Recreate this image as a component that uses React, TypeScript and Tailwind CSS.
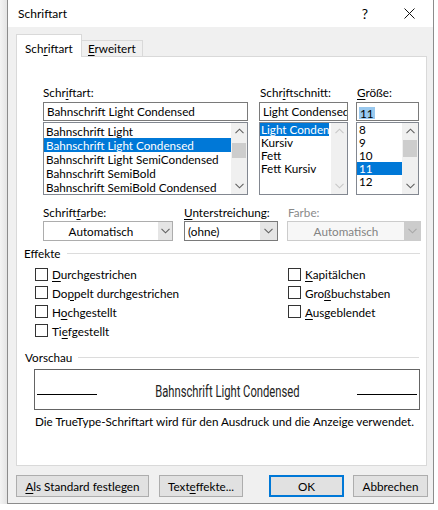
import React from "react";

const U = ({ c }: { c: string }) => (
  <span className="underline decoration-1 underline-offset-[2px]">{c}</span>
);

function Chev({ up, color = "#606060" }: { up?: boolean; color?: string }) {
  return (
    <svg width="9" height="6" viewBox="0 0 9 6">
      {up ? (
        <path d="M0.5 5.2 L4.5 1.2 L8.5 5.2" fill="none" stroke={color} strokeWidth="1.1" />
      ) : (
        <path d="M0.5 0.8 L4.5 4.8 L8.5 0.8" fill="none" stroke={color} strokeWidth="1.1" />
      )}
    </svg>
  );
}

function ScrollBar({ thumbTop, thumbH, disabled }: { thumbTop: number; thumbH: number; disabled?: boolean }) {
  const c = disabled ? "#c8c8c8" : "#606060";
  return (
    <div className="w-[16px] h-full bg-[#f0f0f0] flex flex-col">
      <div className="h-[16px] flex items-center justify-center">
        <Chev up color={c} />
      </div>
      <div className="flex-1">
        {!disabled && <div className="mx-[1px] bg-[#cdcdcd]" style={{ marginTop: thumbTop, height: thumbH }} />}
      </div>
      <div className="h-[16px] flex items-center justify-center">
        <Chev color={c} />
      </div>
    </div>
  );
}

function CheckRow({ h, label }: { h: string; label: React.ReactNode }) {
  return (
    <div className={`${h} flex items-center`}>
      <div className="w-[13px] h-[13px] border border-[#333333] bg-white" />
      <div className="ml-[4px]">{label}</div>
    </div>
  );
}

export default function App() {
  return (
    <div className="w-[438px] h-[510px] bg-white flex font-['Lato',sans-serif] text-[11.7px] leading-[16px] text-black overflow-hidden">
      <div className="w-[7px] h-[504px] bg-gradient-to-r from-[#f4f4f4] to-[#e4e4e4]" />
      <div className="w-[427px] h-[504px] flex flex-col border-x border-b border-[#8c8c8c] bg-[#f0f0f0]">
        {/* Title bar */}
        <div className="h-[27px] bg-white flex items-center">
          <div className="pl-[10px] text-[12px]">Schriftart</div>
          <div className="ml-auto w-[46px] text-center text-[14px]">?</div>
          <div className="w-[42px] flex justify-center">
            <svg width="11" height="11" viewBox="0 0 11 11">
              <path d="M0.5 0.5 L10.5 10.5 M10.5 0.5 L0.5 10.5" stroke="#111" strokeWidth="1" />
            </svg>
          </div>
          <div className="w-[3px]" />
        </div>

        {/* Body */}
        <div className="h-[476px] pl-[8px] pt-[7px] flex flex-col">
          {/* Tabs */}
          <div className="h-[22px] flex items-end">
            <div className="w-[66px] h-[23px] -mb-px relative z-10 bg-white border border-b-0 border-[#d9d9d9] pl-[8px] pt-[5px]">
              Sch<U c="r" />iftart
            </div>
            <div className="w-[61px] h-[16px] border border-l-0 border-b-0 border-[#d9d9d9] pl-[6px] leading-[15px]">
              <U c="E" />rweitert
            </div>
          </div>

          {/* Panel */}
          <div className="w-[411px] h-[410px] border border-[#d9d9d9] bg-white flex flex-col">
            {/* Font section */}
            <div className="pl-[26px] pt-[27px]">
              <div className="flex h-[16px]">
                <div className="w-[205px]">Schr<U c="i" />ftart:</div>
                <div className="ml-[11px] w-[89px] pl-[1px]">Schr<U c="i" />ftschnitt:</div>
                <div className="ml-[8px] w-[63px] pl-[1px]"><U c="G" />röße:</div>
              </div>
              <div className="flex mt-[2px] h-[19px]">
                <div className="w-[205px] border border-[#7a7a7a] pl-[3px] leading-[17px] overflow-hidden whitespace-nowrap">
                  Bahnschrift Light Condensed
                </div>
                <div className="ml-[11px] w-[89px] border border-[#7a7a7a] pl-[3px] leading-[17px] overflow-hidden whitespace-nowrap">
                  Light Condensed
                </div>
                <div className="ml-[8px] w-[63px] border border-[#7a7a7a] pl-[2px] pt-[2px]">
                  <span className="inline-block bg-[#99c9ef] px-[1px] leading-[12px] h-[12px]">11</span>
                </div>
              </div>
              <div className="flex mt-[1px] h-[73px]">
                {/* Font list */}
                <div className="w-[205px] border border-[#828790] flex">
                  <div className="flex-1 pt-[1px] overflow-hidden whitespace-nowrap">
                    <div className="h-[14px] leading-[14px] pl-[2px]">Bahnschrift Light</div>
                    <div className="h-[14px] leading-[14px] pl-[2px] bg-[#0078d7] text-white">Bahnschrift Light Condensed</div>
                    <div className="h-[14px] leading-[14px] pl-[2px]">Bahnschrift Light SemiCondensed</div>
                    <div className="h-[14px] leading-[14px] pl-[2px]">Bahnschrift SemiBold</div>
                    <div className="h-[14px] leading-[14px] pl-[2px]">Bahnschrift SemiBold Condensed</div>
                  </div>
                  <ScrollBar thumbTop={4} thumbH={15} />
                </div>
                {/* Style list */}
                <div className="ml-[11px] w-[89px] border border-[#828790] flex">
                  <div className="flex-1 overflow-hidden whitespace-nowrap">
                    <div className="w-[69px] h-[13px] leading-[13px] pl-[1px] bg-[#0078d7] text-white overflow-hidden">Light Condensed</div>
                    <div className="h-[13px] leading-[13px] pl-[1px]">Kursiv</div>
                    <div className="h-[13px] leading-[13px] pl-[1px]">Fett</div>
                    <div className="h-[13px] leading-[13px] pl-[1px]">Fett Kursiv</div>
                  </div>
                  <ScrollBar thumbTop={0} thumbH={0} disabled />
                </div>
                {/* Size list */}
                <div className="ml-[8px] w-[63px] border border-[#828790] flex">
                  <div className="flex-1 overflow-hidden whitespace-nowrap">
                    <div className="h-[13px] leading-[13px] pl-[2px]">8</div>
                    <div className="h-[13px] leading-[13px] pl-[2px]">9</div>
                    <div className="h-[13px] leading-[13px] pl-[2px]">10</div>
                    <div className="h-[13px] leading-[13px] pl-[2px] bg-[#0078d7] text-white">11</div>
                    <div className="h-[13px] leading-[13px] pl-[2px]">12</div>
                  </div>
                  <ScrollBar thumbTop={1} thumbH={17} />
                </div>
              </div>

              {/* Color / underline row */}
              <div className="flex mt-[9px] h-[16px]">
                <div className="w-[130px]">Schrift<U c="f" />arbe:</div>
                <div className="ml-[11px] w-[94px]"><U c="U" />nterstreichung:</div>
                <div className="ml-[9px] w-[134px] text-[#8a8a8a] pl-[1px]">Farbe:</div>
              </div>
              <div className="flex mt-[1px] h-[20px]">
                <div className="w-[130px] border border-[#adadad] bg-white flex">
                  <div className="flex-1 text-center leading-[18px]">Automatisch</div>
                  <div className="w-[14px] bg-[#e5e5e5] flex items-center justify-center">
                    <Chev />
                  </div>
                </div>
                <div className="ml-[11px] w-[94px] border border-[#7a7a7a] bg-white flex">
                  <div className="flex-1 pl-[3px] leading-[18px]">(ohne)</div>
                  <div className="w-[17px] bg-[#e5e5e5] flex items-center justify-center">
                    <Chev />
                  </div>
                </div>
                <div className="ml-[9px] w-[134px] border border-[#cccccc] bg-[#f7f7f7] flex">
                  <div className="flex-1 text-center leading-[18px] text-[#838383]">Automatisch</div>
                  <div className="w-[16px] bg-[#cccccc] flex items-center justify-center">
                    <Chev color="#a8a8a8" />
                  </div>
                </div>
              </div>
            </div>

            {/* Effekte */}
            <div className="mt-[4px] h-[16px] pl-[7px] pr-[6px] flex items-center">
              <div>Effekte</div>
              <div className="flex-1 ml-[6px] h-px bg-[#dcdcdc]" />
            </div>
            <div className="mt-[4px] pl-[18px] flex">
              <div className="w-[253px] flex flex-col">
                <CheckRow h="h-[18px]" label={<><U c="D" />urchgestrichen</>} />
                <CheckRow h="h-[19px]" label={<>Do<U c="p" />pelt durchgestrichen</>} />
                <CheckRow h="h-[19px]" label={<>H<U c="o" />chgestellt</>} />
                <CheckRow h="h-[19px]" label={<>Ti<U c="e" />fgestellt</>} />
              </div>
              <div className="flex flex-col">
                <CheckRow h="h-[18px]" label={<><U c="K" />apitälchen</>} />
                <CheckRow h="h-[19px]" label={<>Gro<U c="ß" />buchstaben</>} />
                <CheckRow h="h-[19px]" label={<><U c="A" />usgeblendet</>} />
              </div>
            </div>

            {/* Vorschau */}
            <div className="mt-[9px] h-[16px] pl-[8px] pr-[7px] flex items-center">
              <div>Vorschau</div>
              <div className="flex-1 ml-[6px] h-px bg-[#dcdcdc]" />
            </div>
            <div className="mt-[4px] ml-[17px] w-[386px] h-[41px] border border-[#646464] flex items-end pb-[14px] px-[2px]">
              <div className="w-[60px] h-px bg-black" />
              <div className="flex-1 flex justify-center">
                <span className="inline-block font-['Roboto',sans-serif] font-normal text-[#222] text-[17px] leading-[20px] scale-x-[0.66] whitespace-nowrap translate-y-[6px]">
                  Bahnschrift Light Condensed
                </span>
              </div>
              <div className="w-[60px] h-px bg-black" />
            </div>
            <div className="mt-[3px] pl-[18px] h-[16px] whitespace-nowrap">
              Die TrueType-Schriftart wird für den Ausdruck und die Anzeige verwendet.
            </div>
          </div>

          {/* Buttons */}
          <div className="mt-[9px] flex h-[22px]">
            <div className="w-[133px] border border-[#adadad] bg-[#e1e1e1] flex items-center justify-center">
              <span><U c="A" />ls Standard festlegen</span>
            </div>
            <div className="ml-[10px] w-[84px] border border-[#adadad] bg-[#e1e1e1] flex items-center justify-center">
              <span>Text<U c="e" />ffekte...</span>
            </div>
            <div className="ml-[26px] w-[75px] border-2 border-[#0078d7] bg-[#e1e1e1] flex items-center justify-center">
              OK
            </div>
            <div className="ml-[9px] w-[75px] border border-[#adadad] bg-[#e1e1e1] flex items-center justify-center">
              Abbrechen
            </div>
          </div>
        </div>
      </div>
    </div>
  );
}
